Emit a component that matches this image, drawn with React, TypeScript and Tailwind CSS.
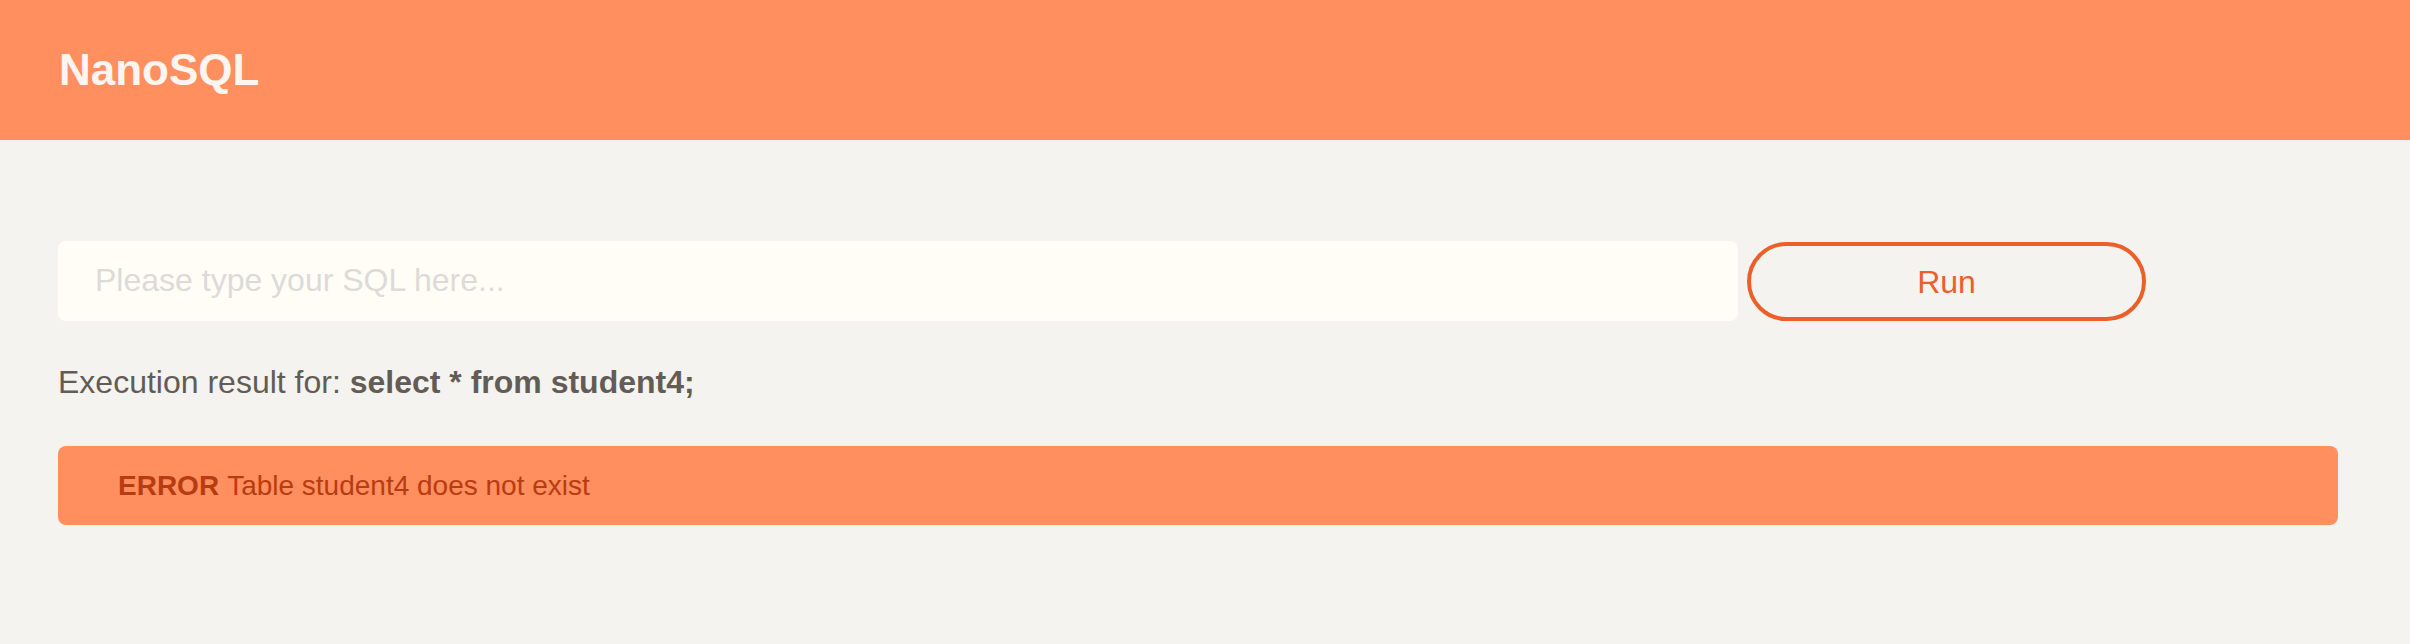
import React, { useState } from "react";

const App: React.FC = () => {
  const [sql, setSql] = useState("");

  return (
    <div className="min-h-screen w-full bg-[#f4f3ef] font-['Liberation_Sans',Arial,sans-serif]">
      {/* header */}
      <header className="h-[140px] bg-[#ff8f5f] flex items-center px-[59px]">
        <h1 className="text-[44px] font-bold text-[#fff5f0] leading-none">NanoSQL</h1>
      </header>

      <main className="pl-[58px] pr-[72px] pt-[100px]">
        {/* query row */}
        <div className="flex items-center gap-[9px]">
          <input
            value={sql}
            onChange={(e) => setSql(e.target.value)}
            placeholder="Please type your SQL here..."
            className="w-[1680px] h-[80px] rounded-[8px] bg-[#fffdf6] px-[37px] text-[32px] text-[#5a5550] placeholder:text-[#dcdbd9] outline-none"
          />
          <button className="w-[399px] h-[79px] mt-[2px] rounded-full border-[4px] border-[#eb5f29] text-[32px] text-[#eb5f29]">
            Run
          </button>
        </div>

        {/* result label */}
        <p className="mt-[43px] text-[32px] leading-[36px] text-[#635c56]">
          Execution result for: <span className="font-bold">select * from student4;</span>
        </p>

        {/* error */}
        <div className="mt-[46px] h-[79px] rounded-[8px] bg-[#ff8f5f] flex items-center pl-[60px] text-[28px] text-[#b83c12]">
          <span className="font-bold">ERROR</span>
          <span className="ml-[8px]">Table student4 does not exist</span>
        </div>
      </main>
    </div>
  );
};

export default App;
